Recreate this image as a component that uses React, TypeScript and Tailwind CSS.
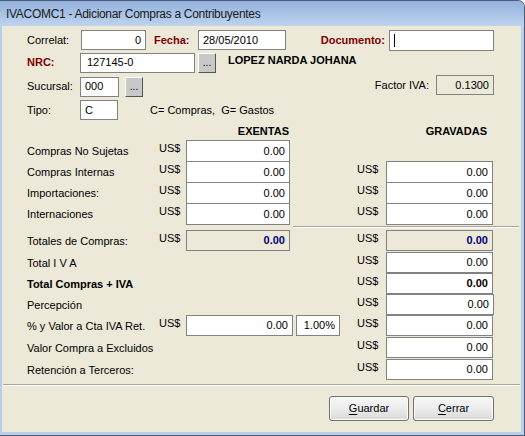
import type { ReactNode } from "react";

const boxBase =
  "flex shrink-0 items-center justify-end border border-[#828282] px-[4px] leading-none";

function Box({
  value = "",
  className = "",
  left = false,
}: {
  value?: ReactNode;
  className?: string;
  left?: boolean;
}) {
  return (
    <div className={`${boxBase} ${left ? "justify-start" : ""} ${className}`}>
      {value}
    </div>
  );
}

function DotsButton() {
  return (
    <div className="flex h-[20px] w-[18px] items-end justify-center border border-t-white border-l-white border-r-[#555] border-b-[#555] bg-[#c8c8c8] pb-[4px] text-[10px] leading-none">
      ...
    </div>
  );
}

function Usd() {
  return <span className="self-start pt-[1px] leading-[14px]">US$</span>;
}

function AmountRow({
  label,
  bold = false,
  left,
  right,
  className = "",
}: {
  label: string;
  bold?: boolean;
  left?: ReactNode;
  right?: ReactNode;
  className?: string;
}) {
  return (
    <div className={`flex h-[21px] items-center ${className}`}>
      <div className={`w-[132px] shrink-0 pt-[1px] ${bold ? "font-bold" : ""}`}>{label}</div>
      <div className="flex h-full w-[131px] shrink-0 items-start overflow-visible">
        {left ? (
          <>
            <div className="w-[27px] shrink-0">
              <Usd />
            </div>
            {left}
          </>
        ) : null}
      </div>
      <div className="w-[67px] shrink-0" />
      <div className="flex h-full shrink-0 items-start">
        {right ? (
          <>
            <div className="w-[29px] shrink-0">
              <Usd />
            </div>
            {right}
          </>
        ) : null}
      </div>
    </div>
  );
}

function Underlined({ first, rest }: { first: string; rest: string }) {
  return (
    <span>
      <span className="underline underline-offset-2">{first}</span>
      {rest}
    </span>
  );
}

export default function App() {
  const exBox = "h-[22px] w-[104px] bg-white";
  const grBox = "h-[22px] w-[107px] bg-white";

  return (
    <div className="flex h-[436px] w-[525px] flex-col overflow-hidden rounded-tr-[7px] border-t border-r border-b border-[#4b5d77] bg-[#b8cfec] font-['Liberation_Sans',Arial,sans-serif] text-[11px] text-black">
      <div className="flex h-[25px] shrink-0 items-center bg-linear-to-b from-[#93b1dc] to-[#bed3ee] pl-[6px] text-[12px] tracking-[-0.3px] text-[#1a1a1a]">
        IVACOMC1 - Adicionar Compras a Contribuyentes
      </div>

      <div className="mb-[3px] ml-[2px] mr-[3px] flex flex-1 flex-col bg-[#ece9d8] pl-[25px] pt-[4px]">
        <div className="flex h-[21px] items-center">
          <div className="w-[54px]">Correlat:</div>
          <Box value="0" className="h-[20px] w-[65px] self-start bg-white" />
          <div className="ml-[8px] w-[44px] font-bold text-[#800000]">Fecha:</div>
          <Box value="28/05/2010" left className="h-[20px] w-[88px] self-start bg-white" />
          <div className="w-[103px] pr-[4px] text-right font-bold text-[#800000]">Documento:</div>
          <Box
            left
            value={<span className="h-[13px] w-px bg-black" />}
            className="h-[21px] w-[105px] bg-white"
          />
        </div>

        <div className="mt-[1px] flex h-[21px] items-center">
          <div className="w-[53px] font-bold text-[#800000]">NRC:</div>
          <Box value="127145-0" left className="h-[20px] w-[115px] bg-white pl-[6px]" />
          <div className="ml-[3px]">
            <DotsButton />
          </div>
          <div className="ml-[12px] -mt-[4px] font-bold">LOPEZ NARDA JOHANA</div>
        </div>

        <div className="mt-[3px] flex h-[21px] items-center">
          <div className="w-[53px]">Sucursal:</div>
          <Box value="000" left className="h-[20px] w-[39px] bg-white" />
          <div className="ml-[6px]">
            <DotsButton />
          </div>
          <div className="flex-1" />
          <div className="mr-[7px] -mt-[2px]">Factor IVA:</div>
          <Box value="0.1300" className="mr-[27px] h-[20px] w-[58px] -mt-[3px] bg-[#ece9d8]" />
        </div>

        <div className="mt-[3px] flex h-[20px] items-center">
          <div className="w-[53px]">Tipo:</div>
          <Box value="C" left className="h-[20px] w-[38px] bg-white" />
          <div className="ml-[32px]">C= Compras,&nbsp; G= Gastos</div>
        </div>

        <div className="flex h-[20px] items-end pb-[1px] font-bold">
          <div className="w-[263px] pr-[1px] text-right">EXENTAS</div>
          <div className="w-[200px] pr-[3px] text-right">GRAVADAS</div>
        </div>

        <AmountRow label="Compras No Sujetas" left={<Box value="0.00" className={exBox} />} />
        <AmountRow
          label="Compras Internas"
          left={<Box value="0.00" className={exBox} />}
          right={<Box value="0.00" className={grBox} />}
        />
        <AmountRow
          label="Importaciones:"
          left={<Box value="0.00" className={exBox} />}
          right={<Box value="0.00" className={grBox} />}
        />
        <AmountRow
          label="Internaciones"
          left={<Box value="0.00" className={exBox} />}
          right={<Box value="0.00" className={grBox} />}
        />

        <div className="ml-[266px] mt-[2px] h-[2px] w-[226px] border-t border-b border-t-[#a7a595] border-b-white" />

        <AmountRow
          className="mt-[2px]"
          label="Totales de Compras:"
          left={
            <Box
              value={<span className="font-bold text-[#000080]">0.00</span>}
              className="h-[21px] w-[104px] bg-[#ece9d8]"
            />
          }
          right={
            <Box
              value={<span className="font-bold text-[#000080]">0.00</span>}
              className="h-[21px] w-[107px] bg-[#ece9d8]"
            />
          }
        />
        <AmountRow
          className="mt-[1px]"
          label="Total I V A"
          right={<Box value="0.00" className="h-[21px] w-[107px] bg-white" />}
        />
        <AmountRow
          label="Total Compras + IVA"
          bold
          right={
            <Box value={<span className="font-bold">0.00</span>} className="h-[21px] w-[107px] bg-white" />
          }
        />
        <AmountRow
          label="Percepción"
          right={<Box value="0.00" className="h-[21px] w-[108px] bg-white" />}
        />
        <AmountRow
          label="% y Valor a Cta IVA Ret."
          left={
            <div className="flex shrink-0">
              <Box value="0.00" className="h-[21px] w-[107px] bg-white" />
              <Box value="1.00%" className="ml-[3px] h-[21px] w-[44px] bg-white" />
            </div>
          }
          right={<Box value="0.00" className="h-[21px] w-[107px] bg-white" />}
        />
        <AmountRow
          className="mt-[1px]"
          label="Valor Compra a Excluidos"
          right={<Box value="0.00" className="h-[21px] w-[107px] bg-white" />}
        />
        <AmountRow
          className="mt-[1px]"
          label="Retención a Terceros:"
          right={<Box value="0.00" className="h-[21px] w-[107px] bg-white" />}
        />

        <div className="-ml-[24px] mt-[4px] h-[2px] w-[517px] border-t border-b border-t-[#a7a595] border-b-white" />

        <div className="mt-[10px] flex justify-end gap-[4px] pr-[27px]">
          <button
            type="button"
            className="flex h-[25px] w-[80px] items-center justify-center rounded-[3px] border border-[#707070] bg-linear-to-b from-[#f7f7f7] via-[#ececec] to-[#d9d9d9] text-[11px] shadow-[inset_0_0_0_1px_#fcfcfc]"
          >
            <Underlined first="G" rest="uardar" />
          </button>
          <button
            type="button"
            className="flex h-[25px] w-[81px] items-center justify-center rounded-[3px] border border-[#707070] bg-linear-to-b from-[#f7f7f7] via-[#ececec] to-[#d9d9d9] text-[11px] shadow-[inset_0_0_0_1px_#fcfcfc]"
          >
            <Underlined first="C" rest="errar" />
          </button>
        </div>
      </div>
    </div>
  );
}
